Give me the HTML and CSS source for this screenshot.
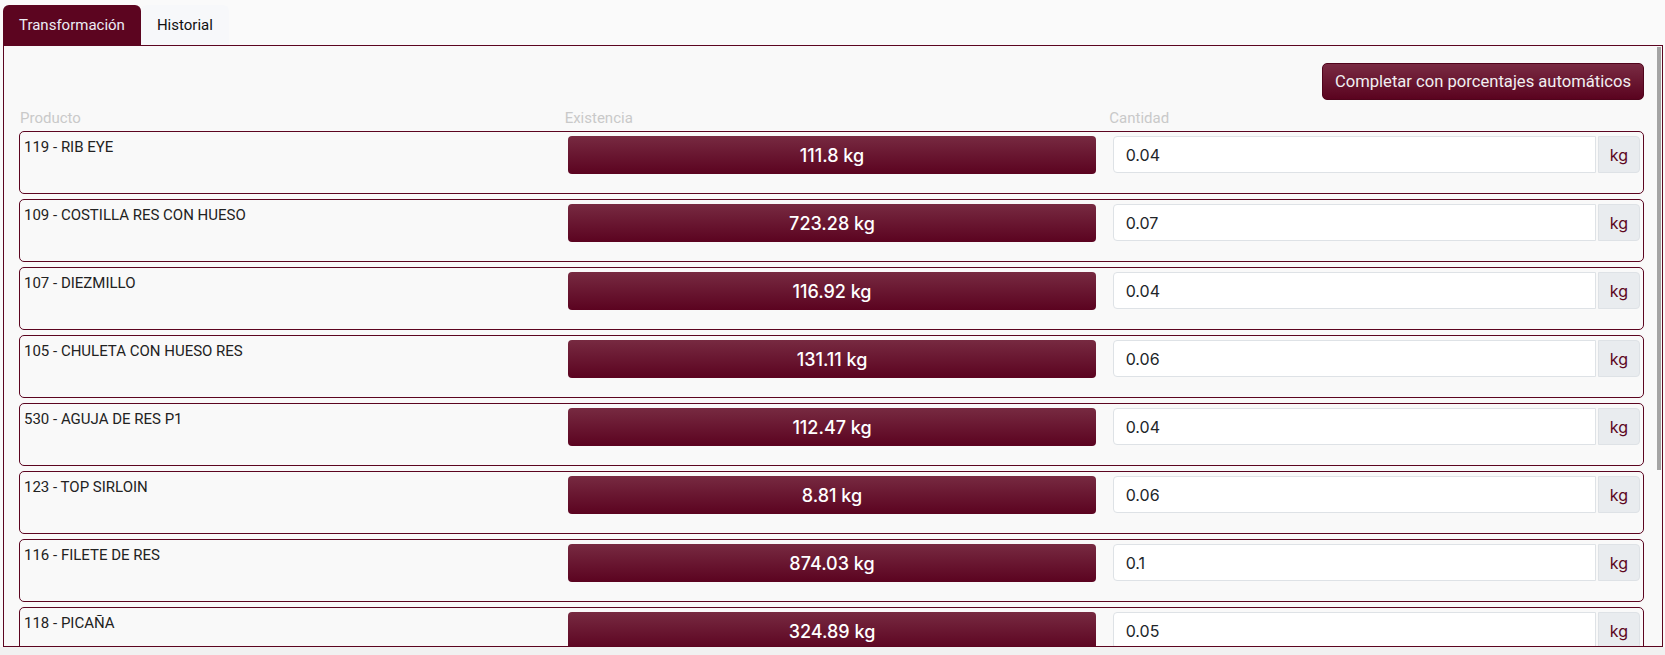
FILE: index.html
```html
<!DOCTYPE html>
<html lang="es">
<head>
<meta charset="utf-8">
<title>Transformación</title>
<link rel="stylesheet" href="styles.css">
</head>
<body>
<div class="app">
  <nav class="tabs">
    <div class="tab tab-active">Transformación</div>
    <div class="tab">Historial</div>
  </nav>
  <section class="panel">
    <div class="panel-body">
      <div class="toolbar">
        <button class="btn-auto" type="button">Completar con porcentajes automáticos</button>
      </div>
      <div class="head-row">
        <div>Producto</div>
        <div>Existencia</div>
        <div>Cantidad</div>
      </div>

      <div class="item">
        <div class="name">119 - RIB EYE</div>
        <div class="stock">111.8 kg</div>
        <div class="qty"><input class="qty-input" type="text" value="0.04"><span class="unit">kg</span></div>
      </div>
      <div class="item">
        <div class="name">109 - COSTILLA RES CON HUESO</div>
        <div class="stock">723.28 kg</div>
        <div class="qty"><input class="qty-input" type="text" value="0.07"><span class="unit">kg</span></div>
      </div>
      <div class="item">
        <div class="name">107 - DIEZMILLO</div>
        <div class="stock">116.92 kg</div>
        <div class="qty"><input class="qty-input" type="text" value="0.04"><span class="unit">kg</span></div>
      </div>
      <div class="item">
        <div class="name">105 - CHULETA CON HUESO RES</div>
        <div class="stock">131.11 kg</div>
        <div class="qty"><input class="qty-input" type="text" value="0.06"><span class="unit">kg</span></div>
      </div>
      <div class="item">
        <div class="name">530 - AGUJA DE RES P1</div>
        <div class="stock">112.47 kg</div>
        <div class="qty"><input class="qty-input" type="text" value="0.04"><span class="unit">kg</span></div>
      </div>
      <div class="item">
        <div class="name">123 - TOP SIRLOIN</div>
        <div class="stock">8.81 kg</div>
        <div class="qty"><input class="qty-input" type="text" value="0.06"><span class="unit">kg</span></div>
      </div>
      <div class="item">
        <div class="name">116 - FILETE DE RES</div>
        <div class="stock">874.03 kg</div>
        <div class="qty"><input class="qty-input" type="text" value="0.1"><span class="unit">kg</span></div>
      </div>
      <div class="item">
        <div class="name">118 - PICAÑA</div>
        <div class="stock">324.89 kg</div>
        <div class="qty"><input class="qty-input" type="text" value="0.05"><span class="unit">kg</span></div>
      </div>
    </div>
    <div class="scroll-track"><div class="scroll-thumb"></div></div>
  </section>
</div>
</body>
</html>
```
FILE: styles.css
```css
* { box-sizing: border-box; }

html, body {
  margin: 0;
  padding: 0;
}

body {
  background: #f1f1f1;
  font-family: Roboto, "Liberation Sans", Arial, sans-serif;
  color: #212529;
  overflow: hidden;
}

.app {
  height: 647px;
  background: #fafafa;
  padding: 5px 2px 0 3px;
}

.tabs {
  display: flex;
  height: 40px;
}

.tab {
  height: 40px;
  line-height: 40px;
  padding: 0 16px;
  font-size: 15px;
  color: #111;
  background: #f7f8fa;
  border-radius: 6px 6px 0 0;
}

.tab-active {
  background: #5c0520;
  color: #ececf4;
}

.panel {
  height: 602px;
  border: 1px solid #5c0520;
  background: #f9f9f9;
  display: flex;
}

.panel-body {
  flex: 1;
  min-width: 0;
  overflow: hidden;
  padding: 17px 12px 0 15px;
}

.scroll-track {
  width: 6px;
  flex: none;
  padding: 1px 1px 0 1px;
}

.scroll-thumb {
  height: 423px;
  background: #a4a4a4;
}

.toolbar {
  display: flex;
  justify-content: flex-end;
  margin-bottom: 8px;
}

.btn-auto {
  height: 37px;
  padding: 0 12px;
  border: 1px solid #50041c;
  border-radius: 5px;
  background: linear-gradient(to bottom, #792b43, #5a031f);
  color: #f1eef0;
  font-family: Roboto, "Liberation Sans", Arial, sans-serif;
  font-size: 16.6px;
  cursor: pointer;
}

.head-row {
  display: grid;
  grid-template-columns: 1fr 1fr 1fr;
  column-gap: 17px;
  padding: 0 7px 0 1px;
  height: 21px;
  line-height: 21px;
  margin-bottom: 2px;
  font-size: 15px;
  color: #c9c9c9;
}

.item {
  display: grid;
  grid-template-columns: 1fr 1fr 1fr;
  column-gap: 17px;
  height: 63px;
  margin-bottom: 5px;
  padding: 4px 3px 0 4px;
  border: 1px solid #5c0520;
  border-radius: 5px;
  align-items: start;
}

.name {
  font-size: 15px;
  line-height: 21px;
  padding-top: 1px;
  color: #222;
}

.stock {
  height: 38px;
  border-radius: 4px;
  background: linear-gradient(to bottom, #772a41, #5b0320);
  color: #fff;
  font-family: Inter, Roboto, sans-serif;
  font-size: 18px;
  font-weight: 500;
  display: flex;
  align-items: center;
  justify-content: center;
}

.qty {
  display: flex;
  height: 37px;
}

.qty-input {
  flex: 1;
  min-width: 0;
  height: 37px;
  border: 1px solid #dee2e6;
  border-radius: 4px 0 0 4px;
  background: #fff;
  padding: 0 12px;
  font-family: Inter, Roboto, sans-serif;
  font-size: 16px;
  color: #212529;
  outline: none;
}

.unit {
  width: 42px;
  height: 37px;
  margin-left: 2px;
  display: flex;
  align-items: center;
  justify-content: center;
  background: #e9ecef;
  border: 1px solid #dee2e6;
  border-radius: 0 4px 4px 0;
  color: #5c0520;
  font-family: Inter, Roboto, sans-serif;
  font-size: 16px;
}
```
